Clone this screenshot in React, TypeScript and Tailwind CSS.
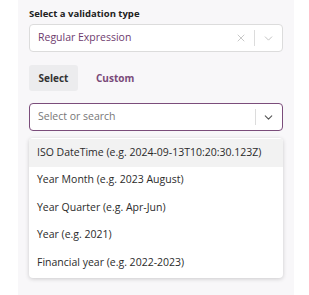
import { ChevronDown, X } from 'lucide-react'

const options = [
  'ISO DateTime (e.g. 2024-09-13T10:20:30.123Z)',
  'Year Month (e.g. 2023 August)',
  'Year Quarter (e.g. Apr-Jun)',
  'Year (e.g. 2021)',
  'Financial year (e.g. 2022-2023)'
]

const App = () => {
  return (
    <div
      className="h-[295px] bg-white text-[#2b2b2b]"
      style={{ fontFamily: '"Open Sans", sans-serif' }}
    >
      <div className="ml-[18px] h-full w-[276px] bg-[#f8f7f9] px-[11px] pt-[6px]">
        <div className="text-[9.5px] font-bold leading-[15px] text-[#222]">
          Select a validation type
        </div>
        <div className="mt-[3px] flex h-[28px] items-center rounded-[4px] border border-[#dcdcdc] bg-white pl-[8px]">
          <span className="flex-1 text-[10.5px] text-[#6e3b6e]">
            Regular Expression
          </span>
          <X size={12} strokeWidth={1.5} className="text-[#b5b5b5]" />
          <span className="mx-[7px] h-[16px] w-px bg-[#dcdcdc]" />
          <ChevronDown
            size={13}
            strokeWidth={1.5}
            className="mr-[7px] text-[#b5b5b5]"
          />
        </div>
        <div className="mt-[13px] flex items-center gap-[11px]">
          <button className="h-[26px] w-[49px] rounded-[3px] bg-[#ececee] text-[10px] font-bold text-[#333]">
            Select
          </button>
          <button className="h-[26px] px-[7px] text-[10px] font-bold text-[#7a4a7a]">
            Custom
          </button>
        </div>
        <div className="mt-[12px] flex h-[28px] items-center rounded-[4px] border border-[#7b4d7b] bg-white pl-[8px]">
          <span className="flex-1 text-[10.5px] text-[#777]">
            Select or search
          </span>
          <span className="mr-[6px] h-[16px] w-px bg-[#dcdcdc]" />
          <ChevronDown
            size={13}
            strokeWidth={2}
            className="mr-[7px] text-[#555]"
          />
        </div>
        <ul className="mt-[7px] overflow-hidden rounded-[4px] bg-white py-px shadow-[0_1px_4px_rgba(0,0,0,0.18)]">
          {options.map((o, i) => (
            <li
              key={o}
              className={`flex h-[27.5px] items-center whitespace-nowrap pl-[8px] text-[10.5px] text-[#2b2b2b] ${
                i === 0 ? 'bg-[#f2f2f2]' : ''
              }`}
            >
              {o}
            </li>
          ))}
        </ul>
      </div>
    </div>
  )
}

export default App
